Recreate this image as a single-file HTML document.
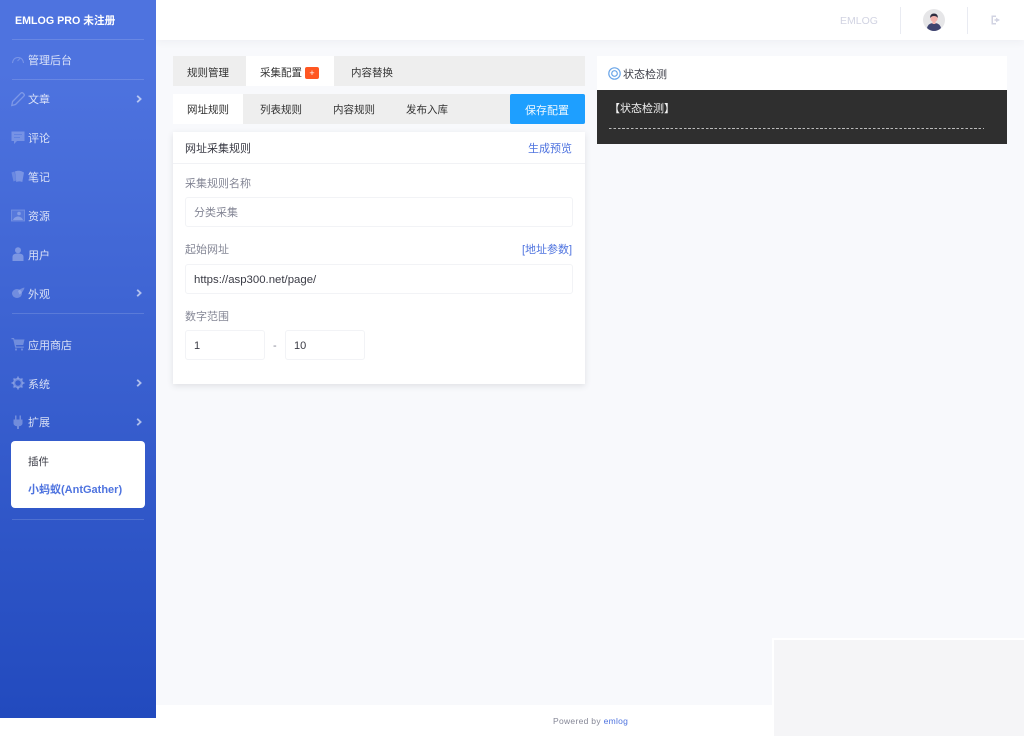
<!DOCTYPE html>
<html lang="zh"><head><meta charset="utf-8"><title>EMLOG</title>
<style>
*{box-sizing:border-box}
html,body{margin:0;padding:0}
body{width:1024px;height:736px;overflow:hidden;position:relative;background:#f8f9fc;font-family:"Liberation Sans","Noto Sans CJK SC",sans-serif;font-size:11px;color:#333}
.a{position:absolute;white-space:nowrap;line-height:16px}
.b{position:absolute}
#side{left:0;top:0;width:156px;height:718px;background:linear-gradient(180deg,#4e73df 10%,#224abe 100%)}
.hr{position:absolute;left:12px;width:132px;height:1px;background:rgba(255,255,255,.15)}
.m{position:absolute;left:28px;color:rgba(255,255,255,.8);font-size:11px;line-height:16px;white-space:nowrap}
.ic{position:absolute;left:11px;width:14px;height:14px;overflow:visible;opacity:.65;filter:blur(.3px)}
.ar{position:absolute;left:136px;width:6px;height:8px}
.inp{position:absolute;background:#fff;border:1px solid #f2f3f6;border-radius:3px;font-size:11px;line-height:31px;padding-left:8px;color:#3a3b45;height:30px}
.lb{position:absolute;color:#858796;font-size:11px;line-height:16px;white-space:nowrap}
.t{position:absolute;font-size:10.5px;line-height:16px;color:#333;white-space:nowrap}
.u{font-size:11px}
</style></head><body>

<div class="b" style="left:156px;top:0;width:868px;height:40px;background:#fff;box-shadow:0 2px 8px rgba(58,59,69,.05)"></div>
<div class="a" style="left:840px;top:13px;color:#d1d3e2;font-size:10.5px">EMLOG</div>
<div class="b" style="left:900px;top:7px;width:1px;height:27px;background:#e9ebf2"></div>
<div class="b" style="left:967px;top:7px;width:1px;height:27px;background:#e9ebf2"></div>
<svg class="b" style="left:923px;top:9px;width:22px;height:22px" viewBox="0 0 22 22">
<circle cx="11" cy="11" r="11" fill="#e6e6e8"/>
<path d="M4 19c1-4 4-5 7-5s6 1 7 5c-2 2-4.500 3-7 3s-5-1-7-3z" fill="#3f4470"/>
<circle cx="11" cy="9.500" r="3.600" fill="#f4b3ad"/>
<rect x="9.500" y="11.500" width="3" height="3.500" fill="#f4b3ad"/>
<path d="M7.200 9c-.3-3 1.500-4.500 3.800-4.500s4.200 1.500 3.800 4.500c-1-1.500-2-2-3.800-2s-2.800.6-3.800 2z" fill="#2f2e41"/>
</svg>
<svg class="b" style="left:990px;top:14px;width:12px;height:12px" viewBox="0 0 12 12">
<path d="M1.500 1.500h4.500v1.500H3v6h3v1.500H1.500z" fill="#d1d3e2"/><path d="M6 3.800l0 1.400h-1.500v1.600H6v1.400L10 6z" fill="#d1d3e2"/>
</svg>

<div class="b" id="side"></div>
<div class="a" style="left:15px;top:13px;color:#fff;font-size:10.7px;font-weight:700">EMLOG PRO 未注册</div>
<div class="hr" style="top:39px"></div>
<div class="hr" style="top:79px"></div>
<div class="hr" style="top:313px"></div>
<div class="hr" style="top:519px"></div>

<svg class="ic" style="top:53px" viewBox="0 0 14 14"><path d="M1.500 10C2 6.500 4 4.500 7 4.500s5 2 5.500 5.500" fill="none" stroke="#fff" stroke-opacity=".38" stroke-width="1"/><path d="M6.500 8L9 5.500" stroke="#fff" stroke-opacity=".35" stroke-width="1"/></svg>
<div class="m" style="top:53px">管理后台</div>

<svg class="ic" style="top:92px" viewBox="0 0 14 14"><path d="M.8 13.500l.8-4L9.800 1.200c.7-.7 1.600-.7 2.300 0l.7.700c.7.700.7 1.600 0 2.300L4.500 12.500z" fill="none" stroke="#fff" stroke-opacity=".42" stroke-width="1.300"/></svg>
<div class="m" style="top:92px">文章</div>
<svg class="ar" style="top:95px" viewBox="0 0 6 8"><path d="M1.200 .8L4.600 4 1.200 7.200" fill="none" stroke="#fff" stroke-opacity=".6" stroke-width="1.800"/></svg>

<svg class="ic" style="top:131px" viewBox="0 0 14 14"><path d="M.5 .5h13v9.500H6l-3 3v-3H.5z" fill="#fff" fill-opacity=".38"/><path d="M3 3.500h8M3 6.500h6" stroke="#4e73df" stroke-opacity=".5" stroke-width="1"/></svg>
<div class="m" style="top:131px">评论</div>

<svg class="ic" style="top:170px" viewBox="0 0 14 14"><path d="M.5 2.500l3-1 1.500 9-2.500 1z" fill="#fff" fill-opacity=".3"/><path d="M4 1.500C6 .5 9 .5 11 1.500l2 1-1.700 9.500c-2-.8-4-.8-6 0z" fill="#fff" fill-opacity=".42"/></svg>
<div class="m" style="top:170px">笔记</div>

<svg class="ic" style="top:209px" viewBox="0 0 14 14"><rect x=".5" y="1" width="13" height="11" fill="#fff" fill-opacity=".15" stroke="#fff" stroke-opacity=".3"/><circle cx="8" cy="4.500" r="1.800" fill="#fff" fill-opacity=".45"/><path d="M2 11c1-2.500 3-3.500 5-3.500s4 1 5 3.500z" fill="#fff" fill-opacity=".45"/></svg>
<div class="m" style="top:209px">资源</div>

<svg class="ic" style="top:247px" viewBox="0 0 14 14"><circle cx="7" cy="3.200" r="3" fill="#fff" fill-opacity=".48"/><path d="M1.500 14V10c0-2.500 2-3.500 5.500-3.500s5.500 1 5.500 3.500v4z" fill="#fff" fill-opacity=".48"/></svg>
<div class="m" style="top:248px">用户</div>

<svg class="ic" style="top:286px" viewBox="0 0 14 14"><ellipse cx="6" cy="7.500" rx="5" ry="4.500" fill="#fff" fill-opacity=".4"/><path d="M7 5c2-2 4-3 6.500-3.500C13 4 11 7 8.500 8.500z" fill="#fff" fill-opacity=".4"/></svg>
<div class="m" style="top:287px">外观</div>
<svg class="ar" style="top:289px" viewBox="0 0 6 8"><path d="M1.200 .8L4.600 4 1.200 7.200" fill="none" stroke="#fff" stroke-opacity=".6" stroke-width="1.800"/></svg>

<svg class="ic" style="top:337px" viewBox="0 0 14 14"><path d="M.5 1h2.500l.5 1.500H13.500l-1.300 5.500H5l.3 1.500h7.500v1.200H4.200L2.200 2.300H.5z" fill="#fff" fill-opacity=".42"/><circle cx="5" cy="12.500" r="1.100" fill="#fff" fill-opacity=".4"/><circle cx="11" cy="12.500" r="1.100" fill="#fff" fill-opacity=".4"/></svg>
<div class="m" style="top:338px">应用商店</div>

<svg class="ic" style="top:376px" viewBox="0 0 14 14"><circle cx="7" cy="7" r="4" fill="none" stroke="#fff" stroke-opacity=".45" stroke-width="2.400"/><path d="M7 .5v13M.5 7h13M2.400 2.400l9.200 9.200M11.600 2.400l-9.200 9.200" stroke="#fff" stroke-opacity=".4" stroke-width="2" stroke-dasharray="2.200 8.600 2.200"/></svg>
<div class="m" style="top:377px">系统</div>
<svg class="ar" style="top:379px" viewBox="0 0 6 8"><path d="M1.200 .8L4.600 4 1.200 7.200" fill="none" stroke="#fff" stroke-opacity=".6" stroke-width="1.800"/></svg>

<svg class="ic" style="top:415px" viewBox="0 0 14 14"><path d="M4 .5h1.500v4H8.500v-4H10v4h1.500v3.500c0 2-1.500 3-3.500 3.300V14H6v-2.700c-2-.3-3.500-1.300-3.500-3.300V4.500H4z" fill="#fff" fill-opacity=".45"/></svg>
<div class="m" style="top:415px">扩展</div>
<svg class="ar" style="top:418px" viewBox="0 0 6 8"><path d="M1.200 .8L4.600 4 1.200 7.200" fill="none" stroke="#fff" stroke-opacity=".6" stroke-width="1.800"/></svg>

<div class="b" style="left:11px;top:441px;width:134px;height:67px;background:#fff;border-radius:4px"></div>
<div class="a" style="left:28px;top:454px;color:#3a3b45;font-size:10.5px">插件</div>
<div class="a" style="left:28px;top:482px;color:#4e73df;font-size:11px;font-weight:700">小蚂蚁(AntGather)</div>

<div class="b" style="left:173px;top:56px;width:412px;height:30px;background:#eee"></div>
<div class="b" style="left:246px;top:56px;width:88px;height:30px;background:#fff"></div>
<div class="t" style="left:187px;top:65px">规则管理</div>
<div class="t" style="left:260px;top:65px">采集配置</div>
<div class="b" style="left:305px;top:67px;width:14px;height:12px;background:#ff5722;border-radius:2px;color:#fff;font-size:9px;line-height:12px;text-align:center">+</div>
<div class="t" style="left:351px;top:65px">内容替换</div>

<div class="b" style="left:173px;top:94px;width:412px;height:30px;background:#eee"></div>
<div class="b" style="left:173px;top:94px;width:70px;height:30px;background:#fff"></div>
<div class="t" style="left:187px;top:102px">网址规则</div>
<div class="t" style="left:260px;top:102px">列表规则</div>
<div class="t" style="left:333px;top:102px">内容规则</div>
<div class="t" style="left:406px;top:102px">发布入库</div>
<div class="b" style="left:510px;top:94px;width:75px;height:30px;background:#1e9fff;border-radius:2px;color:rgba(255,255,255,.92);font-size:11px;line-height:34px;padding-left:15px">保存配置</div>

<div class="b" style="left:173px;top:132px;width:412px;height:252px;background:#fff;box-shadow:0 2px 6px rgba(58,59,69,.13)"></div>
<div class="b" style="left:173px;top:163px;width:412px;height:1px;background:#f1f2f5"></div>
<div class="t u" style="left:185px;top:141px;color:#3a3b45">网址采集规则</div>
<div class="t u" style="left:528px;top:141px;color:#4e73df">生成预览</div>

<div class="lb" style="left:185px;top:176px">采集规则名称</div>
<div class="inp" style="left:185px;top:197px;width:388px;color:#858796">分类采集</div>
<div class="lb" style="left:185px;top:242px">起始网址</div>
<div class="t u" style="left:522px;top:242px;color:#4e73df">[地址参数]</div>
<div class="inp" style="left:185px;top:264px;width:388px;font-size:11.4px">https://asp300.net/page/</div>
<div class="lb" style="left:185px;top:309px">数字范围</div>
<div class="inp" style="left:185px;top:330px;width:80px">1</div>
<div class="lb" style="left:273px;top:338px">-</div>
<div class="inp" style="left:285px;top:330px;width:80px">10</div>

<div class="b" style="left:597px;top:56px;width:410px;height:34px;background:#fff"></div>
<svg class="b" style="left:608px;top:67px;width:13px;height:13px" viewBox="0 0 13 13"><circle cx="6.500" cy="6.500" r="5.700" fill="none" stroke="#6aa5e8" stroke-width="1.200"/><circle cx="6.500" cy="6.500" r="2.800" fill="none" stroke="#6aa5e8" stroke-width="1.200"/></svg>
<div class="t u" style="left:623px;top:67px;color:#3a3b45">状态检测</div>
<div class="b" style="left:597px;top:90px;width:410px;height:54px;background:#2f2f2f"></div>
<div class="t u" style="left:609px;top:101px;color:#f2f2f2">【状态检测】</div>
<div class="b" style="left:609px;top:128px;width:375px;height:1px;background:repeating-linear-gradient(90deg,#bbb 0,#bbb 2.600px,transparent 2.600px,transparent 4.400px)"></div>

<div class="b" style="left:156px;top:705px;width:616px;height:31px;background:#fff"></div>
<div class="b" style="left:0;top:718px;width:156px;height:18px;background:#fff"></div>
<div class="a" style="left:553px;top:713px;font-size:8.500px;color:#858796;letter-spacing:.3px">Powered by <span style="color:#4e73df">emlog</span></div>
<div class="b" style="left:772px;top:638px;width:252px;height:98px;background:#f5f5f7;border-left:2px solid #fff;border-top:2px solid #fff"></div>
</body></html>
